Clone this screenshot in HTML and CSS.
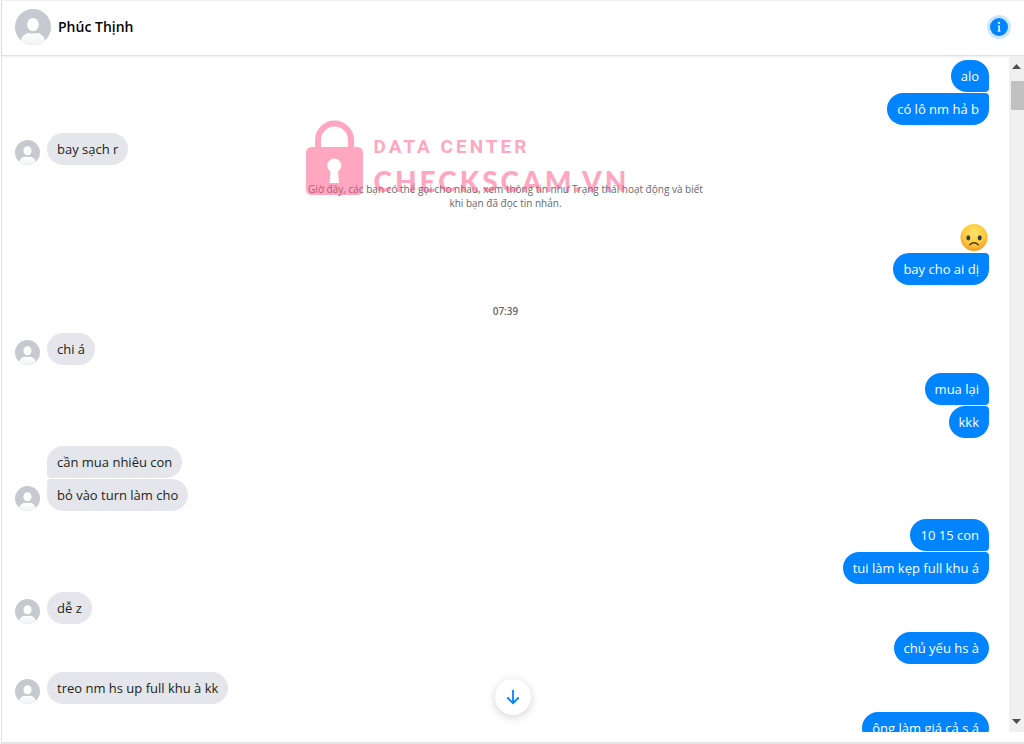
FILE: index.html
```html
<!DOCTYPE html>
<html lang="vi">
<head>
<meta charset="utf-8">
<meta name="viewport" content="width=device-width, initial-scale=1">
<title>Phúc Thịnh</title>
<link rel="stylesheet" href="styles.css">
</head>
<body>
<svg class="defs" aria-hidden="true">
  <defs>
    <linearGradient id="body-fade" x1="0" y1="0" x2="0" y2="1">
      <stop offset="0" stop-color="#fff"/><stop offset="1" stop-color="#f1f2f4"/>
    </linearGradient>
    <radialGradient id="emoji-fill" cx=".5" cy=".35" r=".65">
      <stop offset="0" stop-color="#ffe46b"/><stop offset=".6" stop-color="#fdcb3c"/><stop offset="1" stop-color="#f39a25"/>
    </radialGradient>
    <clipPath id="round"><circle cx="18" cy="18" r="18"/></clipPath>
    <symbol id="person" viewBox="0 0 36 36">
      <g clip-path="url(#round)">
        <rect width="36" height="36" fill="#c6cad0"/>
        <ellipse cx="18" cy="15.500" rx="5.800" ry="6.600" fill="#fff"/>
        <path d="M5.500 36C5.500 28 9 25.500 13 24Q18 25 23 24C27 25.500 30.500 28 30.500 36Z" fill="url(#body-fade)"/>
      </g>
    </symbol>
  </defs>
</svg>
<div class="window">
  <header class="header">
    <svg class="avatar avatar-large" role="img" aria-label="Phúc Thịnh"><use href="#person"/></svg>
    <h1 class="name">Phúc Thịnh</h1>
    <button class="info" type="button" aria-label="Thông tin">
      <svg width="18" height="18" viewBox="0 0 18 18" aria-hidden="true"><circle cx="9" cy="9" r="9" fill="#0084ff"/><circle cx="9" cy="4.900" r="1.200" fill="#d8ecff"/><path d="M7.700 7.500H10V12.800H10.600V13.800H7.700V12.800H8.300V8.500H7.700Z" fill="#d8ecff"/></svg>
    </button>
  </header>
  <div class="chat">
    <main class="messages">
      <div class="group sent">
        <p class="bubble">alo</p>
        <p class="bubble">có lô nm hả b</p>
      </div>
      <div class="row">
        <svg class="avatar" aria-hidden="true"><use href="#person"/></svg>
        <div class="group"><p class="bubble">bay sạch r</p></div>
      </div>
      <div class="notice">
        <p class="notice-text">Giờ đây, các bạn có thể gọi cho nhau, xem thông tin như Trạng thái hoạt động và biết khi bạn đã đọc tin nhắn.</p>
        <div class="watermark">
          <svg class="lock" width="57" height="76" viewBox="0 0 57 76" aria-hidden="true">
            <path d="M12 27V20a16.500 16.500 0 0 1 33 0V27" fill="none" stroke="#ff5084" stroke-width="6"/>
            <path fill="#ff5084" fill-rule="evenodd" d="M6 27H51Q57 27 57 33V69Q57 75 51 75H6Q0 75 0 69V33Q0 27 6 27ZM24.500 51.500L23.500 63H33L32 51.500A7 7 0 1 0 24.500 51.500Z"/>
          </svg>
          <div class="brand">
            <span class="brand-top">DATA CENTER</span>
            <span class="brand-bottom">CHECKSCAM.VN</span>
          </div>
        </div>
      </div>
      <div class="group sent">
        <svg class="emoji" viewBox="0 0 28 28" role="img" aria-label="🙁">
          <circle cx="14" cy="14" r="13.500" fill="url(#emoji-fill)"/>
          <ellipse cx="8.300" cy="14.300" rx="2" ry="2.600" fill="#343b4a"/><ellipse cx="19.700" cy="14.300" rx="2" ry="2.600" fill="#343b4a"/>
          <path d="M9.700 21.300Q14 17.300 18.300 21.300" fill="none" stroke="#513517" stroke-width="1.500" stroke-linecap="round"/>
        </svg>
        <p class="bubble follows">bay cho ai dị</p>
      </div>
      <time class="time" datetime="07:39">07:39</time>
      <div class="row">
        <svg class="avatar" aria-hidden="true"><use href="#person"/></svg>
        <div class="group"><p class="bubble">chi á</p></div>
      </div>
      <div class="group sent">
        <p class="bubble">mua lại</p>
        <p class="bubble">kkk</p>
      </div>
      <div class="row">
        <svg class="avatar" aria-hidden="true"><use href="#person"/></svg>
        <div class="group">
          <p class="bubble">cần mua nhiêu con</p>
          <p class="bubble">bỏ vào turn làm cho</p>
        </div>
      </div>
      <div class="group sent">
        <p class="bubble">10 15 con</p>
        <p class="bubble">tui làm kẹp full khu á</p>
      </div>
      <div class="row">
        <svg class="avatar" aria-hidden="true"><use href="#person"/></svg>
        <div class="group"><p class="bubble">dễ z</p></div>
      </div>
      <div class="group sent"><p class="bubble">chủ yếu hs à</p></div>
      <div class="row">
        <svg class="avatar" aria-hidden="true"><use href="#person"/></svg>
        <div class="group"><p class="bubble">treo nm hs up full khu à kk</p></div>
      </div>
      <div class="group sent"><p class="bubble">ông làm giá cả s á</p></div>
    </main>
    <div class="scrollbar" aria-hidden="true">
      <svg width="9" height="5" viewBox="0 0 9 5"><path d="M0 5L4.500 0L9 5Z" fill="#505050"/></svg>
      <div class="thumb"></div>
      <svg class="arrow-down" width="9" height="5" viewBox="0 0 9 5"><path d="M0 0L4.500 5L9 0Z" fill="#505050"/></svg>
    </div>
    <button class="jump" type="button" aria-label="Xuống cuối">
      <svg width="14" height="16" viewBox="0 0 14 16" aria-hidden="true"><path d="M7 1V14M1.300 8.500L7 14.200L12.700 8.500" fill="none" stroke="#0084ff" stroke-width="1.800"/></svg>
    </button>
  </div>
</div>
</body>
</html>
```
FILE: styles.css
```css
* {
  box-sizing: border-box;
}

body {
  margin: 0;
  background: #fff;
  color: #1c1e21;
  font: 13px/20px "Open Sans", "Noto Sans", sans-serif;
}

p,
h1 {
  margin: 0;
}

button {
  display: grid;
  place-items: center;
  padding: 0;
  border: 0;
  border-radius: 50%;
  cursor: pointer;
}

.defs {
  position: absolute;
  width: 0;
  height: 0;
}

.window {
  display: flex;
  flex-direction: column;
  height: 100vh;
  margin-left: 1px;
  padding-bottom: 10px;
  border-left: 1px solid #e2e2e2;
  border-bottom: 2px solid #e4e4e4;
  border-top: 1px solid #f1f1f1;
}

.header {
  display: flex;
  flex: none;
  align-items: center;
  gap: 7px;
  height: 55px;
  padding: 0 13px 3px;
  border-bottom: 1px solid #e0e0e0;
  box-shadow: 0 1px 2px rgba(0, 0, 0, 0.08);
}

.name {
  flex: 1;
  font-size: 14px;
  font-weight: 600;
  color: #050505;
}

.info {
  width: 24px;
  height: 24px;
  background: #cce6ff;
}

.avatar {
  flex: none;
  width: 25px;
  height: 25px;
}

.avatar-large {
  width: 36px;
  height: 36px;
}

.chat {
  position: relative;
  display: flex;
  flex: 1;
  min-height: 0;
}

.messages {
  display: flex;
  flex: 1;
  flex-direction: column;
  gap: 8px;
  min-width: 0;
  padding: 4px 20px 0 13px;
  overflow: hidden;
}

.messages > * {
  flex: none;
}

.row {
  display: flex;
  align-items: flex-end;
  gap: 7px;
}

.group {
  display: flex;
  flex-direction: column;
  align-items: flex-start;
  gap: 1px;
}

.sent {
  align-items: flex-end;
}

.bubble {
  padding: 6px 10px;
  border-radius: 16px;
  background: #e4e6eb;
}

.bubble:not(:last-child) {
  border-bottom-left-radius: 4px;
}

.bubble + .bubble {
  border-top-left-radius: 4px;
}

.sent .bubble {
  background: #0084ff;
  color: #fff;
}

.sent .bubble:not(:last-child) {
  border-radius: 16px 16px 4px 16px;
}

.sent .bubble + .bubble,
.sent .follows {
  border-radius: 16px 4px 16px 16px;
}

.emoji {
  width: 28px;
  height: 29px;
  margin-right: 1px;
}

.notice {
  position: relative;
  align-self: center;
  width: 410px;
  margin: 9px 0 5px 7px;
  color: #65676b;
  font-size: 10px;
  line-height: 14px;
  text-align: center;
}

.watermark {
  position: absolute;
  left: 5px;
  bottom: 8px;
  display: flex;
  gap: 11px;
  color: #ff5084;
  opacity: 0.5;
  white-space: nowrap;
}

.brand {
  display: flex;
  flex-direction: column;
  padding-top: 14px;
  text-align: left;
}

.brand-top {
  font: 700 19px/26px Roboto, sans-serif;
  letter-spacing: 3px;
}

.brand-bottom {
  font: 900 28px/42px Lato, sans-serif;
  letter-spacing: 3px;
}

.time {
  margin: 8px 0 4px 7px;
  color: #65676b;
  font-size: 10px;
  font-weight: 600;
  line-height: 20px;
  text-align: center;
}

.scrollbar {
  display: flex;
  flex: none;
  flex-direction: column;
  align-items: center;
  width: 15px;
  padding: 8px 0;
  background: #f0f0f0;
}

.thumb {
  align-self: flex-end;
  width: 13px;
  height: 29px;
  margin-top: 12px;
  background: #c1c1c1;
}

.arrow-down {
  margin-top: auto;
}

.jump {
  position: absolute;
  bottom: 17px;
  left: 50%;
  width: 36px;
  height: 36px;
  background: #fff;
  box-shadow: 0 2px 10px rgba(0, 0, 0, 0.18);
  transform: translateX(-50%);
}
```
